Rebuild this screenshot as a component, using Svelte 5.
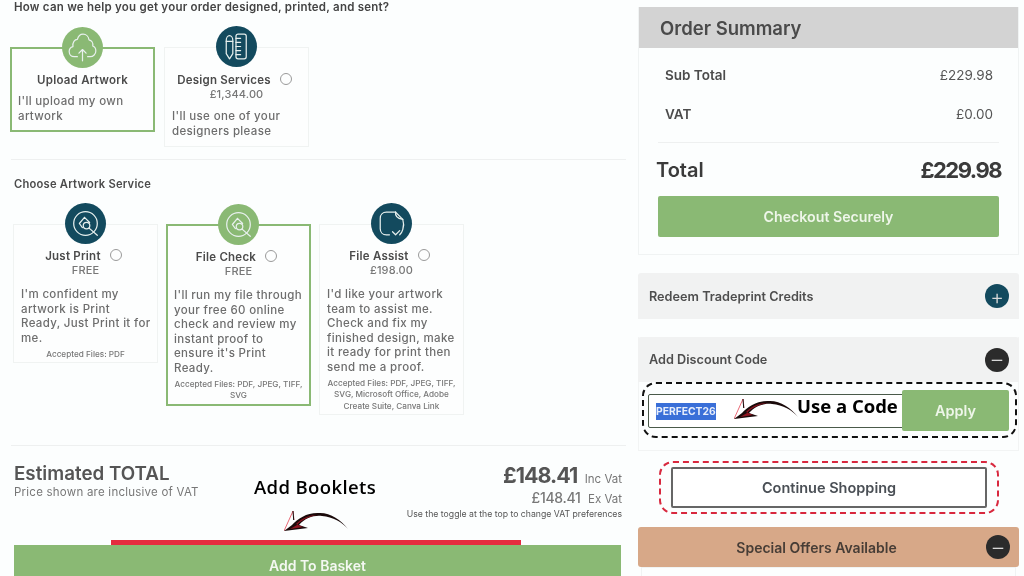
<script>
	const artworkOptions = [
		{ title: "Just Print", price: "FREE", icon: "search", lines: ["I'm confident my", "artwork is Print", "Ready, Just Print it for", "me."], files: "Accepted Files: PDF" },
		{ title: "File Check", price: "FREE", icon: "search", lines: ["I'll run my file through", "your free 60 online", "check and review my", "instant proof to", "ensure it's Print", "Ready."], files: "Accepted Files: PDF, JPEG, TIFF, SVG", active: true },
		{ title: "File Assist", price: "£198.00", icon: "doc", lines: ["I'd like your artwork", "team to assist me.", "Check and fix my", "finished design, make", "it ready for print then", "send me a proof."], files: "Accepted Files: PDF, JPEG, TIFF, SVG, Microsoft Office, Adobe Create Suite, Canva Link" }
	];
</script>

{#snippet icon(name)}
	<svg viewBox="0 0 40 40" fill="none" stroke="#e8f0ee" stroke-width="1.2" stroke-linecap="round" stroke-linejoin="round">
		{#if name === "cloud"}
			<path d="M15 29h-3c-3 0-5-2.300-5-5 0-2.400 1.500-4.200 3.700-4.800C10 15 12.500 12 15 12c.8-3 3-5 5.500-5 3.200 0 5.500 2.500 5.800 5.500 2.500.5 4.200 3 3.700 6 2 .8 3 2.800 3 4.800 0 3-2.500 5.700-5.500 5.700H25" />
			<path d="M20 33V22M16.500 25.500 20 22l3.500 3.500" />
		{:else if name === "design"}
			<path d="M10 14c0-2.500 1.400-4.500 3.200-4.500s3.200 2 3.200 4.500v13l-3.200 5-3.200-5z" />
			<path d="M10 15h6.400" />
			<rect x="19.500" y="8" width="10" height="24" rx="2" />
			<path d="M19.500 12h4.500M19.500 16h4.500M19.500 20h4.500M19.500 24h4.500M19.500 28h4.500" />
		{:else if name === "search"}
			<circle cx="20" cy="20" r="11.500" />
			<circle cx="21" cy="22" r="3.200" />
			<path d="M19 14l-5 6 3 4M19 14l5 5" />
			<path d="M23.500 24.500l8 7" />
		{:else}
			<path d="M24 9H15c-3.500 0-6 2.500-6 6v10c0 3.500 2.500 6 6 6h3" />
			<path d="M24 9l7 7c1 3 1 7 0 10-.5 2-1.500 3.500-3 5" />
			<path d="M24 9c-.5 3 1 6 7 7" />
			<path d="M21 28l3 3 4-4" />
		{/if}
	</svg>
{/snippet}

{#snippet swoosh()}
	<svg class="swoosh" viewBox="0 0 64 20">
		<path d="M0 20 9 0l1 9" fill="none" stroke="#e0283a" stroke-width=".7" />
		<path d="M9 0l.7 9" stroke="#111" stroke-width="1" />
		<path d="M0 20 24 17 15 14C21 7 30 4 38 5 49 6 58 11 64 18 57 9 47 2 36 2 24 1 14 7 8 14L0 20Z" fill="#1a0a0a" />
		<path d="M6 18 19 16 12 13C18 7 26 4 34 4 26 5 17 9 13 14Z" fill="#8e1420" />
	</svg>
{/snippet}

{#snippet info()}
	<span class="info"></span>
{/snippet}

<div class="page">
	<main class="left">
		<h2 class="question">How can we help you get your order designed, printed, and sent?</h2>

		<div class="options first">
			<div class="option active upload">
				<span class="badge green">{@render icon("cloud")}</span>
				<h3>Upload Artwork</h3>
				<p>I'll upload my own artwork</p>
			</div>
			<div class="option design">
				<span class="badge navy">{@render icon("design")}</span>
				<h3>Design Services {@render info()}</h3>
				<div class="price">£1,344.00</div>
				<p>I'll use one of your designers please</p>
			</div>
		</div>

		<hr class="rule" />

		<h2 class="subhead">Choose Artwork Service</h2>

		<div class="options second">
			{#each artworkOptions as opt}
				<div class="option" class:active={opt.active}>
					<span class="badge" class:green={opt.active} class:navy={!opt.active}>{@render icon(opt.icon)}</span>
					<h3>{opt.title} {@render info()}</h3>
					<div class="price">{opt.price}</div>
					<p class="fixed">
						{#each opt.lines as line}
							{line}<br />
						{/each}
					</p>
					<small>{opt.files}</small>
				</div>
			{/each}
		</div>

		<hr class="rule low" />

		<div class="estimate">
			<div class="est-left">
				<div class="est-title">Estimated TOTAL</div>
				<div class="est-note">Price shown are inclusive of VAT</div>
			</div>
			<div class="est-right">
				<div class="inc"><b>£148.41</b> <span>Inc Vat</span></div>
				<div class="ex"><b>£148.41</b> <span>Ex Vat</span></div>
				<div class="toggle-note">Use the toggle at the top to change VAT preferences</div>
			</div>
			<div class="callout">Add Booklets</div>
			<div class="callout-arrow">{@render swoosh()}</div>
		</div>

		<div class="redbar"></div>
		<button class="basket">Add To Basket</button>
	</main>

	<aside class="right">
		<section class="summary">
			<h2>Order Summary</h2>
			<div class="line"><b>Sub Total</b><span>£229.98</span></div>
			<div class="line"><b>VAT</b><span>£0.00</span></div>
			<hr />
			<div class="total"><span>Total</span><b>£229.98</b></div>
			<button class="checkout">Checkout Securely</button>
		</section>

		<section class="panel redeem">
			<span>Redeem Tradeprint Credits</span>
			<span class="toggle navy">+</span>
		</section>

		<section class="discount">
			<div class="panel">
				<span>Add Discount Code</span>
				<span class="toggle dark">–</span>
			</div>
			<div class="dashed">
				<div class="code-row">
					<div class="code"><mark>PERFECT26</mark></div>
					<button class="apply">Apply</button>
				</div>
				<div class="code-label">Use a Code</div>
				<div class="code-arrow">{@render swoosh()}</div>
			</div>
		</section>

		<div class="continue-wrap">
			<button class="continue">Continue Shopping</button>
		</div>

		<section class="offers">
			<span>Special Offers Available</span>
			<span class="toggle dark">–</span>
		</section>
		<div class="offers-body"></div>
	</aside>
</div>

<style>
	:global(body) {
		margin: 0;
		background: #fcfefe;
	}

	.page {
		width: 1024px;
		height: 576px;
		overflow: hidden;
		display: flex;
		font-family: Inter, "Liberation Sans", sans-serif;
		color: #4a4a4a;
		filter: blur(0.45px);
		background: #fcfefe;
	}

	h2, h3, p {
		margin: 0;
		font-weight: 600;
	}

	button {
		font-family: inherit;
		border: 0;
		cursor: pointer;
	}

	.left {
		width: 638px;
		flex: none;
		box-sizing: border-box;
		padding-left: 10px;
		height: 576px;
	}

	.question {
		font-size: 11.5px;
		line-height: 14px;
		margin-left: 4px;
		color: #444;
		letter-spacing: 0.02em;
	}

	.options {
		display: flex;
		align-items: flex-start;
	}

	.options.first {
		margin-top: 33px;
		gap: 9px;
	}

	.options.second {
		margin-top: 33px;
		margin-left: 3px;
		gap: 8px;
	}

	.option {
		width: 145px;
		box-sizing: border-box;
		position: relative;
		border: 1px solid #f0f3f2;
		padding: 24px 7px 2px 7px;
		background: #fdfefe;
	}

	.option.active {
		border: 2px solid #8ab974;
		padding-left: 6px;
		padding-right: 6px;
	}

	.badge {
		position: absolute;
		left: 50%;
		top: -22px;
		margin-left: -21px;
		width: 41px;
		height: 41px;
		border-radius: 50%;
		display: flex;
	}

	.badge svg {
		width: 100%;
		height: 100%;
	}

	.green {
		background: #8ab974;
	}

	.navy {
		background: #134a5e;
	}

	.option h3 {
		font-size: 11.5px;
		line-height: 14px;
		text-align: center;
		color: #4b4b4b;
		white-space: nowrap;
		letter-spacing: 0.02em;
	}

	.info {
		display: inline-block;
		width: 10px;
		height: 10px;
		border: 1px solid #9a9a9a;
		border-radius: 50%;
		margin: 0 4px 0 6px;
		vertical-align: -1px;
	}

	.price {
		font-size: 11px;
		line-height: 14px;
		text-align: center;
		color: #777;
		font-weight: 500;
		letter-spacing: 0.01em;
	}

	.option p {
		font-size: 11.5px;
		line-height: 14.5px;
		font-weight: 500;
		color: #6d6d6d;
		margin-top: 10px;
		letter-spacing: 0.03em;
	}

	.option p.fixed {
		white-space: nowrap;
	}

	.option small {
		display: block;
		font-size: 8.2px;
		line-height: 11.4px;
		text-align: center;
		color: #777;
		margin-top: 4px;
		font-weight: 500;
	}

	.first .upload {
		height: 85px;
		padding-top: 24px;
	}

	.first .upload p {
		margin: 7px 0 0 0;
	}

	.first .design {
		height: 100px;
		padding-top: 25px;
	}

	.first .design p {
		margin-top: 8px;
	}

	.rule {
		border: 0;
		border-top: 1px solid #eef0f0;
		margin: 12px 0 0 1px;
		width: 615px;
	}

	.subhead {
		font-size: 11.2px;
		line-height: 14px;
		margin: 17px 0 0 4px;
		color: #4b4b4b;
		letter-spacing: 0.02em;
	}

	.rule.low {
		margin-top: 30px;
	}

	.estimate {
		position: relative;
		display: flex;
		justify-content: space-between;
		padding: 17px 11px 0 4px;
		height: 77px;
		width: 608px;
		box-sizing: content-box;
	}

	.est-title {
		font-size: 18.8px;
		line-height: 22px;
		font-weight: 600;
		color: #555;
	}

	.est-note {
		font-size: 11.5px;
		line-height: 14px;
		color: #777;
		letter-spacing: 0.02em;
	}

	.est-right {
		text-align: right;
		color: #777;
	}

	.inc b {
		font-size: 21.5px;
		font-weight: 700;
		color: #555;
		line-height: 24px;
		letter-spacing: -1px;
	}

	.inc span, .ex span {
		font-size: 11.5px;
		margin-left: 3px;
	}

	.ex {
		line-height: 21px;
		margin-top: 0;
	}

	.ex b {
		font-size: 14px;
		font-weight: 500;
		letter-spacing: -0.3px;
	}

	.toggle-note {
		font-size: 8.7px;
		line-height: 11px;
		color: #555;
		margin-top: -1px;
		white-space: nowrap;
	}

	.callout {
		position: absolute;
		left: 244px;
		top: 31px;
		font: 600 18.5px/20px "Open Sans", sans-serif;
		color: #000;
		letter-spacing: 0.02em;
	}

	.callout-arrow {
		position: absolute;
		left: 274px;
		top: 65px;
	}

	.swoosh {
		display: block;
		width: 64px;
		height: 20px;
	}

	.redbar {
		height: 5px;
		width: 410px;
		margin-left: 101px;
		background: #e52b3f;
	}

	.basket {
		display: block;
		width: 607px;
		height: 40px;
		margin-left: 4px;
		background: #8ab974;
		color: #f4f8f2;
		font-size: 14px;
		font-weight: 600;
	}

	.right {
		width: 381px;
		flex: none;
		height: 576px;
		display: flex;
		flex-direction: column;
		padding-top: 7px;
		box-sizing: content-box;
	}

	.summary {
		border: 1px solid #f0f3f3;
		border-top: 0;
		height: 248px;
		box-sizing: border-box;
		padding: 0 19px;
		flex: none;
	}

	.summary h2 {
		background: #d3d3d3;
		margin: 0 -19px 7px;
		padding: 0 21px;
		height: 41px;
		font-size: 18.5px;
		line-height: 42px;
		color: #4a4a4a;
		font-weight: 600;
	}

	.line {
		display: flex;
		justify-content: space-between;
		align-items: center;
		height: 39px;
		padding: 0 6px 0 7px;
		font-size: 13.5px;
		color: #555;
	}

	.line b {
		font-weight: 600;
		color: #4c4c4c;
	}

	.summary hr {
		border: 0;
		border-top: 1px solid #eef0f0;
		margin: 9px 0 0;
	}

	.total {
		display: flex;
		justify-content: space-between;
		align-items: center;
		height: 53px;
		margin: 0 -2px;
		font-size: 20px;
		font-weight: 600;
		color: #3b3b3b;
	}

	.total b {
		font-size: 22px;
		font-weight: 700;
		letter-spacing: -1.5px;
	}

	.checkout {
		display: block;
		width: 100%;
		height: 41px;
		background: #8ab974;
		color: #eef6e9;
		border-radius: 2px;
		font-size: 14.2px;
		font-weight: 600;
	}

	.panel {
		display: flex;
		justify-content: space-between;
		align-items: center;
		box-sizing: border-box;
		height: 46px;
		padding: 0 10px 0 11px;
		background: #f1f2f2;
		font-size: 12.7px;
		font-weight: 600;
		color: #4e4e4e;
		border-radius: 3px 3px 0 0;
	}

	.redeem {
		margin-top: 18px;
		flex: none;
	}

	.toggle {
		width: 24px;
		height: 24px;
		border-radius: 50%;
		display: flex;
		align-items: center;
		justify-content: center;
		color: #d8d8d8;
		font-size: 21px;
		line-height: 1;
		font-weight: 300;
		flex: none;
	}

	.dark {
		background: #2b2b2b;
	}

	.discount {
		margin-top: 18px;
		flex: none;
		height: 114px;
		box-sizing: border-box;
		border: 1px solid #f2f4f4;
		border-top: 0;
	}

	.discount .panel {
		margin: 0 -1px;
		height: 45px;
	}

	.dashed {
		position: relative;
		box-sizing: border-box;
		margin: 0 1px 0 3px;
		height: 56px;
		border: 2px dashed #111;
		border-radius: 14px;
		padding: 6px 6px 0 4px;
	}

	.code-row {
		display: flex;
		align-items: center;
	}

	.code {
		flex: 1;
		box-sizing: border-box;
		height: 34px;
		margin-right: -3px;
		border: 1px solid #4a5a4a;
		border-radius: 2px;
		padding: 8px 0 0 7px;
		background: #fff;
		font-size: 10.3px;
		line-height: 16px;
		font-weight: 700;
	}

	.code mark {
		display: inline-block;
		background: #3a6fd8;
		color: #e8eefb;
		line-height: 17px;
	}

	.apply {
		width: 107px;
		height: 41px;
		background: #8ab974;
		color: #eef6e9;
		border-radius: 2px;
		font-size: 14.5px;
		font-weight: 600;
		position: relative;
	}

	.code-label {
		position: absolute;
		left: 153px;
		top: 12px;
		font: 700 18.5px/20px "Open Sans", sans-serif;
		color: #000;
	}

	.code-arrow {
		position: absolute;
		left: 90px;
		top: 15px;
	}

	.continue-wrap {
		flex: none;
		box-sizing: border-box;
		width: 340px;
		height: 53px;
		margin: 10px 0 0 21px;
		border: 2px dashed #d8283e;
		border-radius: 14px;
		padding: 4px 10px;
	}

	.continue {
		width: 100%;
		height: 41px;
		background: #fff;
		border: 2px solid #666;
		border-radius: 2px;
		font-size: 14.5px;
		font-weight: 600;
		color: #4a4f55;
	}

	.offers {
		flex: none;
		position: relative;
		display: flex;
		align-items: center;
		justify-content: center;
		box-sizing: border-box;
		height: 40px;
		margin-top: 13px;
		padding-right: 24px;
		background: #d7a888;
		border-radius: 3px;
		font-size: 14px;
		font-weight: 600;
		color: #473d36;
	}

	.offers .toggle {
		position: absolute;
		right: 9px;
		top: 8px;
	}

	.offers-body {
		flex: 1;
		margin: 0 3px;
		border: 1px solid #f0f3f3;
	}
</style>
